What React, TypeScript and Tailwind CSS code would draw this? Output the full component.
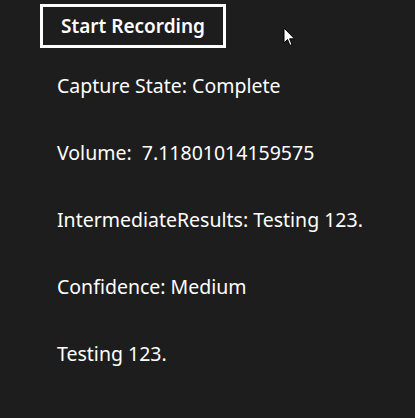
export default function App() {
  const lines = [
    'Capture State: Complete',
    'Volume:  7.11801014159575',
    'IntermediateResults: Testing 123.',
    'Confidence: Medium',
    'Testing 123.',
  ];
  return (
    <div
      className="relative w-[415px] h-[418px] bg-[#1d1d1d] text-white overflow-hidden"
      style={{ fontFamily: '"Noto Sans", "Open Sans", sans-serif' }}
    >
      <div className="pl-[40px] pt-[4px]">
        <button
          type="button"
          className="w-[186px] h-[44px] border-[3px] border-white text-[19px] font-semibold leading-none whitespace-pre"
        >
          Start Recording
        </button>
      </div>
      <div className="pl-[57px] pt-[25px] flex flex-col gap-[41px]">
        {lines.map((t) => (
          <div key={t} className="text-[19.5px] leading-[26px] whitespace-pre">
            {t}
          </div>
        ))}
      </div>
      <svg
        className="absolute left-[283px] top-[27px]"
        width="14"
        height="20"
        viewBox="0 0 14 20"
      >
        <path d="M1 1 L1 16 L4.5 12.5 L7 18.5 L9 17.5 L6.6 11.8 L11.5 11.8 Z" fill="white" stroke="black" strokeWidth="1" />
      </svg>
    </div>
  );
}
